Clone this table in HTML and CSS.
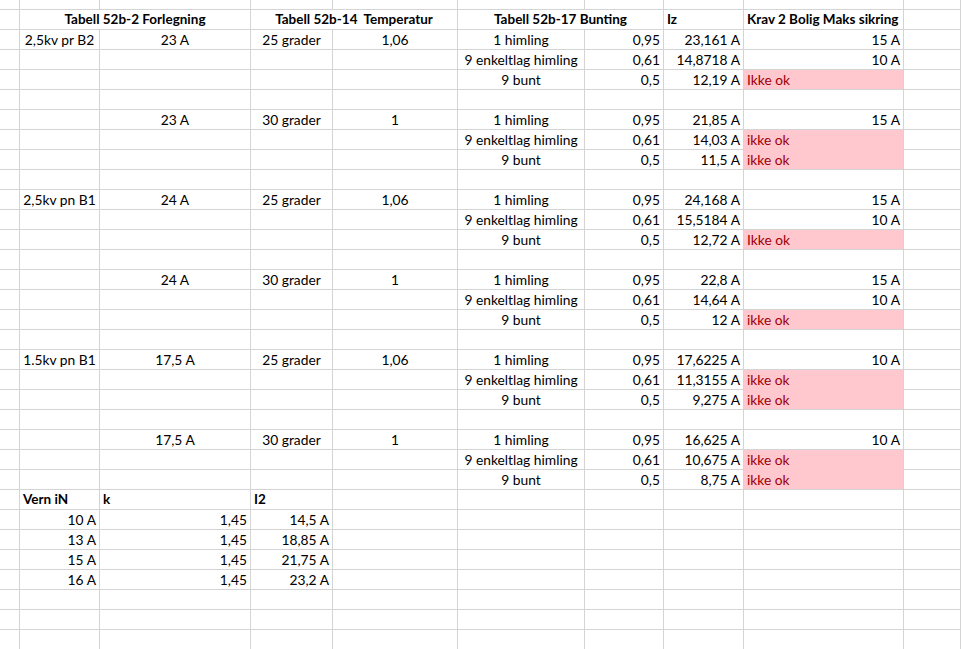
FILE: index.html
```html
<!DOCTYPE html>
<html>
<head>
<meta charset="utf-8">
<link rel="stylesheet" href="styles.css">
</head>
<body>
<div class="sheet">
  <!-- top partial row -->
  <div class="c"></div><div class="c"></div><div class="c"></div><div class="c"></div><div class="c"></div><div class="c"></div><div class="c"></div><div class="c"></div><div class="c"></div><div class="c"></div>

  <!-- r1 -->
  <div class="c"></div>
  <div class="c s2 ctr b">Tabell 52b-2 Forlegning</div>
  <div class="c s2 ctr b">Tabell 52b-14&nbsp; Temperatur</div>
  <div class="c s2 ctr b">Tabell 52b-17 Bunting</div>
  <div class="c b">Iz</div>
  <div class="c b">Krav 2 Bolig Maks sikring</div>
  <div class="c"></div>

  <!-- r2 -->
  <div class="c"></div><div class="c ctr">2,5kv pr B2</div><div class="c ctr">23 A</div><div class="c ctr">25 grader</div><div class="c ctr">1,06</div><div class="c ctr">1 himling</div><div class="c r">0,95</div><div class="c r">23,161 A</div><div class="c r">15 A</div><div class="c"></div>
  <!-- r3 -->
  <div class="c"></div><div class="c"></div><div class="c"></div><div class="c"></div><div class="c"></div><div class="c ctr">9 enkeltlag himling</div><div class="c r">0,61</div><div class="c r">14,8718 A</div><div class="c r">10 A</div><div class="c"></div>
  <!-- r4 -->
  <div class="c"></div><div class="c"></div><div class="c"></div><div class="c"></div><div class="c"></div><div class="c ctr">9 bunt</div><div class="c r">0,5</div><div class="c r">12,19 A</div><div class="c bad">Ikke ok</div><div class="c"></div>
  <!-- r5 -->
  <div class="c"></div><div class="c"></div><div class="c"></div><div class="c"></div><div class="c"></div><div class="c"></div><div class="c"></div><div class="c"></div><div class="c"></div><div class="c"></div>

  <!-- r6 -->
  <div class="c"></div><div class="c"></div><div class="c ctr">23 A</div><div class="c ctr">30 grader</div><div class="c ctr">1</div><div class="c ctr">1 himling</div><div class="c r">0,95</div><div class="c r">21,85 A</div><div class="c r">15 A</div><div class="c"></div>
  <!-- r7 -->
  <div class="c"></div><div class="c"></div><div class="c"></div><div class="c"></div><div class="c"></div><div class="c ctr">9 enkeltlag himling</div><div class="c r">0,61</div><div class="c r">14,03 A</div><div class="c bad join">ikke ok</div><div class="c"></div>
  <!-- r8 -->
  <div class="c"></div><div class="c"></div><div class="c"></div><div class="c"></div><div class="c"></div><div class="c ctr">9 bunt</div><div class="c r">0,5</div><div class="c r">11,5 A</div><div class="c bad">ikke ok</div><div class="c"></div>
  <!-- r9 -->
  <div class="c"></div><div class="c"></div><div class="c"></div><div class="c"></div><div class="c"></div><div class="c"></div><div class="c"></div><div class="c"></div><div class="c"></div><div class="c"></div>

  <!-- r10 -->
  <div class="c"></div><div class="c ctr">2,5kv pn B1</div><div class="c ctr">24 A</div><div class="c ctr">25 grader</div><div class="c ctr">1,06</div><div class="c ctr">1 himling</div><div class="c r">0,95</div><div class="c r">24,168 A</div><div class="c r">15 A</div><div class="c"></div>
  <!-- r11 -->
  <div class="c"></div><div class="c"></div><div class="c"></div><div class="c"></div><div class="c"></div><div class="c ctr">9 enkeltlag himling</div><div class="c r">0,61</div><div class="c r">15,5184 A</div><div class="c r">10 A</div><div class="c"></div>
  <!-- r12 -->
  <div class="c"></div><div class="c"></div><div class="c"></div><div class="c"></div><div class="c"></div><div class="c ctr">9 bunt</div><div class="c r">0,5</div><div class="c r">12,72 A</div><div class="c bad">Ikke ok</div><div class="c"></div>
  <!-- r13 -->
  <div class="c"></div><div class="c"></div><div class="c"></div><div class="c"></div><div class="c"></div><div class="c"></div><div class="c"></div><div class="c"></div><div class="c"></div><div class="c"></div>

  <!-- r14 -->
  <div class="c"></div><div class="c"></div><div class="c ctr">24 A</div><div class="c ctr">30 grader</div><div class="c ctr">1</div><div class="c ctr">1 himling</div><div class="c r">0,95</div><div class="c r">22,8 A</div><div class="c r">15 A</div><div class="c"></div>
  <!-- r15 -->
  <div class="c"></div><div class="c"></div><div class="c"></div><div class="c"></div><div class="c"></div><div class="c ctr">9 enkeltlag himling</div><div class="c r">0,61</div><div class="c r">14,64 A</div><div class="c r">10 A</div><div class="c"></div>
  <!-- r16 -->
  <div class="c"></div><div class="c"></div><div class="c"></div><div class="c"></div><div class="c"></div><div class="c ctr">9 bunt</div><div class="c r">0,5</div><div class="c r">12 A</div><div class="c bad">ikke ok</div><div class="c"></div>
  <!-- r17 -->
  <div class="c"></div><div class="c"></div><div class="c"></div><div class="c"></div><div class="c"></div><div class="c"></div><div class="c"></div><div class="c"></div><div class="c"></div><div class="c"></div>

  <!-- r18 -->
  <div class="c"></div><div class="c ctr">1.5kv pn B1</div><div class="c ctr">17,5 A</div><div class="c ctr">25 grader</div><div class="c ctr">1,06</div><div class="c ctr">1 himling</div><div class="c r">0,95</div><div class="c r">17,6225 A</div><div class="c r">10 A</div><div class="c"></div>
  <!-- r19 -->
  <div class="c"></div><div class="c"></div><div class="c"></div><div class="c"></div><div class="c"></div><div class="c ctr">9 enkeltlag himling</div><div class="c r">0,61</div><div class="c r">11,3155 A</div><div class="c bad join">ikke ok</div><div class="c"></div>
  <!-- r20 -->
  <div class="c"></div><div class="c"></div><div class="c"></div><div class="c"></div><div class="c"></div><div class="c ctr">9 bunt</div><div class="c r">0,5</div><div class="c r">9,275 A</div><div class="c bad">ikke ok</div><div class="c"></div>
  <!-- r21 -->
  <div class="c"></div><div class="c"></div><div class="c"></div><div class="c"></div><div class="c"></div><div class="c"></div><div class="c"></div><div class="c"></div><div class="c"></div><div class="c"></div>

  <!-- r22 -->
  <div class="c"></div><div class="c"></div><div class="c ctr">17,5 A</div><div class="c ctr">30 grader</div><div class="c ctr">1</div><div class="c ctr">1 himling</div><div class="c r">0,95</div><div class="c r">16,625 A</div><div class="c r">10 A</div><div class="c"></div>
  <!-- r23 -->
  <div class="c"></div><div class="c"></div><div class="c"></div><div class="c"></div><div class="c"></div><div class="c ctr">9 enkeltlag himling</div><div class="c r">0,61</div><div class="c r">10,675 A</div><div class="c bad join">ikke ok</div><div class="c"></div>
  <!-- r24 -->
  <div class="c"></div><div class="c"></div><div class="c"></div><div class="c"></div><div class="c"></div><div class="c ctr">9 bunt</div><div class="c r">0,5</div><div class="c r">8,75 A</div><div class="c bad">ikke ok</div><div class="c"></div>

  <!-- r25 -->
  <div class="c"></div><div class="c b">Vern iN</div><div class="c b">k</div><div class="c b">I2</div><div class="c"></div><div class="c"></div><div class="c"></div><div class="c"></div><div class="c"></div><div class="c"></div>
  <!-- r26 -->
  <div class="c"></div><div class="c r">10 A</div><div class="c r">1,45</div><div class="c r">14,5 A</div><div class="c"></div><div class="c"></div><div class="c"></div><div class="c"></div><div class="c"></div><div class="c"></div>
  <!-- r27 -->
  <div class="c"></div><div class="c r">13 A</div><div class="c r">1,45</div><div class="c r">18,85 A</div><div class="c"></div><div class="c"></div><div class="c"></div><div class="c"></div><div class="c"></div><div class="c"></div>
  <!-- r28 -->
  <div class="c"></div><div class="c r">15 A</div><div class="c r">1,45</div><div class="c r">21,75 A</div><div class="c"></div><div class="c"></div><div class="c"></div><div class="c"></div><div class="c"></div><div class="c"></div>
  <!-- r29 -->
  <div class="c"></div><div class="c r">16 A</div><div class="c r">1,45</div><div class="c r">23,2 A</div><div class="c"></div><div class="c"></div><div class="c"></div><div class="c"></div><div class="c"></div><div class="c"></div>
  <!-- r30 -->
  <div class="c"></div><div class="c"></div><div class="c"></div><div class="c"></div><div class="c"></div><div class="c"></div><div class="c"></div><div class="c"></div><div class="c"></div><div class="c"></div>
  <!-- r31 -->
  <div class="c"></div><div class="c"></div><div class="c"></div><div class="c"></div><div class="c"></div><div class="c"></div><div class="c"></div><div class="c"></div><div class="c"></div><div class="c"></div>
  <!-- r32 -->
  <div class="c"></div><div class="c"></div><div class="c"></div><div class="c"></div><div class="c"></div><div class="c"></div><div class="c"></div><div class="c"></div><div class="c"></div><div class="c"></div>
</div>
</body>
</html>
```

FILE: styles.css
```css
html, body {
  margin: 0;
  padding: 0;
  background: #ffffff;
  overflow: hidden;
}

.sheet {
  display: grid;
  grid-template-columns: 20px 80px 151px 82px 125px 127px 79px 80px 160px 57px;
  grid-template-rows: 10px;
  grid-auto-rows: 20px;
  width: 961px;
  font-family: "Lato", "Liberation Sans", sans-serif;
  font-size: 13.8px;
  color: #000000;
}

.c {
  box-sizing: border-box;
  border-right: 1px solid #d4d4d4;
  border-bottom: 1px solid #d4d4d4;
  display: flex;
  align-items: flex-end;
  padding: 0 3px 2px 3px;
  white-space: nowrap;
  line-height: 15px;
  overflow: visible;
}

.s2 {
  grid-column: span 2;
}

.ctr {
  justify-content: center;
}

.r {
  justify-content: flex-end;
}

.b {
  font-weight: 700;
  font-size: 13.5px;
}

.bad {
  background: #ffc7ce;
  color: #9c0006;
}

.join {
  border-bottom-color: #ffc7ce;
}
```
